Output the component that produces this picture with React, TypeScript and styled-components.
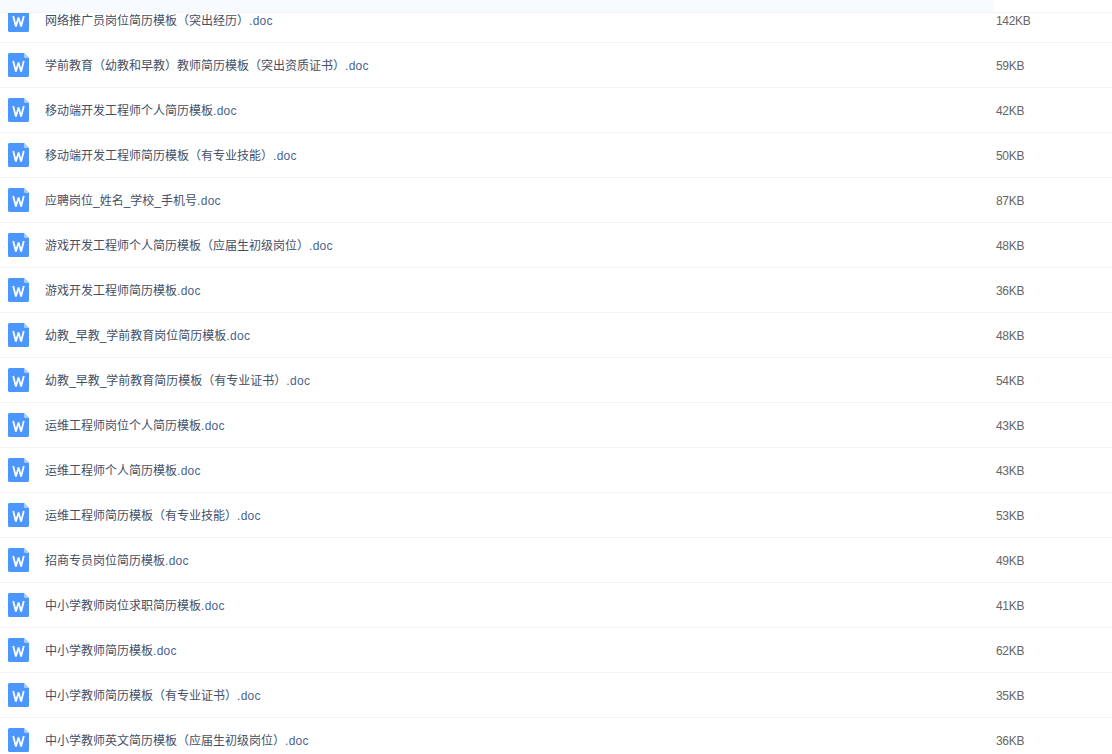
import React from "react";
import styled, { createGlobalStyle } from "styled-components";

const Global = createGlobalStyle`
  html, body { margin: 0; padding: 0; background: #fff; overflow: hidden; height: 754px; }
  body { font-family: "Liberation Sans", "Noto Sans CJK SC", sans-serif; }
`;

const Page = styled.div`
  width: 1112px;
  height: 754px;
  overflow: hidden;
  display: flex;
  flex-direction: column;
`;

const HoverBand = styled.div`
  flex: none;
  height: 12px;
  display: flex;
`;

const BandFill = styled.div`
  width: 994px;
  background: #f7fafe;
`;

const Row = styled.div<{ $first?: boolean }>`
  flex: none;
  box-sizing: border-box;
  height: ${(p) => (p.$first ? 31 : 45)}px;
  border-top: 1px solid ${(p) => (p.$first ? "#f2f4f8" : "transparent")};
  border-bottom: 1px solid #f2f4f8;
  display: flex;
  align-items: ${(p) => (p.$first ? "flex-start" : "center")};
  padding-left: 8px;
  overflow: hidden;
`;

const IconWrap = styled.svg<{ $first?: boolean }>`
  flex: none;
  width: 21px;
  height: 24px;
  margin-top: ${(p) => (p.$first ? -5 : -2)}px;
`;

const Name = styled.div<{ $first?: boolean }>`
  width: 950px;
  margin-left: 16px;
  flex: none;
  font-size: 12px;
  line-height: 16px;
  color: #444f66;
  white-space: nowrap;
  margin-top: ${(p) => (p.$first ? 0 : 1)}px;
`;

const Ext = styled.span`
  color: #4a6490;
  letter-spacing: 0.3px;
`;

const Size = styled.div<{ $first?: boolean }>`
  margin-left: 1px;
  font-size: 12px;
  line-height: 16px;
  color: #666;
  letter-spacing: -0.3px;
  white-space: nowrap;
  margin-top: ${(p) => (p.$first ? 0 : 1)}px;
`;

const WordIcon = ({ first }: { first?: boolean }) => (
  <IconWrap $first={first} viewBox="0 0 21 24">
    <path
      d="M1.5 0H16L21 5V22.5A1.5 1.5 0 0 1 19.5 24H1.5A1.5 1.5 0 0 1 0 22.5V1.5A1.5 1.5 0 0 1 1.5 0Z"
      fill="#4b97ff"
    />
    <path d="M16 0L21 5H17.5A1.5 1.5 0 0 1 16 3.5Z" fill="#a9cdff" />
    <path
      d="M5.2 8L7.9 18.4L10.5 9.6L13.1 18.4L15.8 8"
      fill="none"
      stroke="#fff"
      strokeWidth="1.8"
      strokeLinejoin="bevel"
    />
  </IconWrap>
);

const files: [string, string][] = [
  ["网络推广员岗位简历模板（突出经历）", "142KB"],
  ["学前教育（幼教和早教）教师简历模板（突出资质证书）", "59KB"],
  ["移动端开发工程师个人简历模板", "42KB"],
  ["移动端开发工程师简历模板（有专业技能）", "50KB"],
  ["应聘岗位_姓名_学校_手机号", "87KB"],
  ["游戏开发工程师个人简历模板（应届生初级岗位）", "48KB"],
  ["游戏开发工程师简历模板", "36KB"],
  ["幼教_早教_学前教育岗位简历模板", "48KB"],
  ["幼教_早教_学前教育简历模板（有专业证书）", "54KB"],
  ["运维工程师岗位个人简历模板", "43KB"],
  ["运维工程师个人简历模板", "43KB"],
  ["运维工程师简历模板（有专业技能）", "53KB"],
  ["招商专员岗位简历模板", "49KB"],
  ["中小学教师岗位求职简历模板", "41KB"],
  ["中小学教师简历模板", "62KB"],
  ["中小学教师简历模板（有专业证书）", "35KB"],
  ["中小学教师英文简历模板（应届生初级岗位）", "36KB"],
];

export default function App() {
  return (
    <Page>
      <Global />
      <HoverBand>
        <BandFill />
      </HoverBand>
      {files.map(([name, size], i) => (
        <Row key={name} $first={i === 0}>
          <WordIcon first={i === 0} />
          <Name $first={i === 0}>
            {name}
            <Ext>.doc</Ext>
          </Name>
          <Size $first={i === 0}>{size}</Size>
        </Row>
      ))}
    </Page>
  );
}
